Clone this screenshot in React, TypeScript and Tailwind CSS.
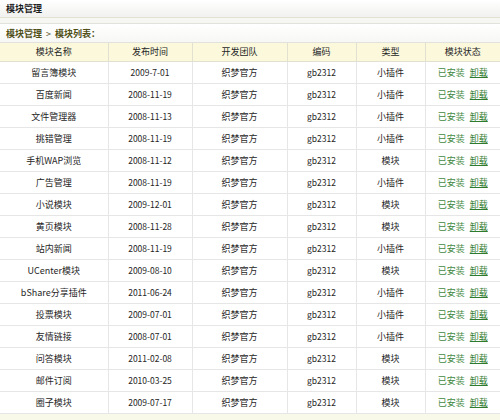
import React from 'react'

type Mod = { name: string; date: string; kind: string }

const MODULES: Mod[] = [
  { name: '留言簿模块', date: '2009-7-01', kind: '小插件' },
  { name: '百度新闻', date: '2008-11-19', kind: '小插件' },
  { name: '文件管理器', date: '2008-11-13', kind: '小插件' },
  { name: '挑错管理', date: '2008-11-19', kind: '小插件' },
  { name: '手机WAP浏览', date: '2008-11-12', kind: '模块' },
  { name: '广告管理', date: '2008-11-19', kind: '小插件' },
  { name: '小说模块', date: '2009-12-01', kind: '模块' },
  { name: '黄页模块', date: '2008-11-28', kind: '模块' },
  { name: '站内新闻', date: '2008-11-19', kind: '小插件' },
  { name: 'UCenter模块', date: '2009-08-10', kind: '模块' },
  { name: 'bShare分享插件', date: '2011-06-24', kind: '小插件' },
  { name: '投票模块', date: '2009-07-01', kind: '小插件' },
  { name: '友情链接', date: '2008-07-01', kind: '小插件' },
  { name: '问答模块', date: '2011-02-08', kind: '模块' },
  { name: '邮件订阅', date: '2010-03-25', kind: '模块' },
  { name: '圈子模块', date: '2009-07-17', kind: '模块' },
]

const HEADERS = ['模块名称', '发布时间', '开发团队', '编码', '类型', '模块状态']
const WIDTHS = ['w-[108px]', 'w-[84px]', 'w-[95px]', 'w-[69px]', 'w-[69px]', 'w-[75px]']

const FONT = { fontFamily: '"SimSun", "Noto Sans CJK SC", "Liberation Sans", sans-serif' }

export default function App() {
  return (
    <div className="h-[420px] w-[500px] overflow-hidden bg-[#f8f9e8] text-[9px] leading-none text-[#262626]" style={FONT}>
      <div className="flex h-[18px] items-center border-b border-[#e3e1d2] bg-gradient-to-b from-white to-[#f1f1ef] px-[6px] font-bold text-[#1e1e1e]">
        模块管理
      </div>
      <div className="h-[5px] bg-[#f6f6f2]" />
      <div className="flex h-[20px] items-center border-y border-[#e2e2dc] bg-gradient-to-b from-white to-[#f7f7f5] px-[6px] font-bold text-[#4f4f16]">
        模块管理<span className="mx-[4px] font-normal">&gt;</span>模块列表：
      </div>
      <table className="w-[500px] table-fixed border-collapse bg-white">
        <thead>
          <tr className="h-[18px] bg-[#fbf8dc]">
            {HEADERS.map((h, i) => (
              <th key={h} className={`${WIDTHS[i]} border-b border-l border-[#e2e0d0] font-normal first:border-l-0`}>
                {h}
              </th>
            ))}
          </tr>
        </thead>
        <tbody>
          {MODULES.map((m) => (
            <tr key={m.name} className="h-[22px] text-center">
              <td className="border-b border-[#e6e6e6]">{m.name}</td>
              <td className="border-b border-l border-[#e6e6e6] text-[8.5px]">{m.date}</td>
              <td className="border-b border-l border-[#e6e6e6]">织梦官方</td>
              <td className="border-b border-l border-[#e6e6e6] text-[8.5px]">gb2312</td>
              <td className="border-b border-l border-[#e6e6e6]">{m.kind}</td>
              <td className="border-b border-l border-[#e6e6e6]">
                <span className="text-[#3f8a3f]">已安装</span>
                <a href="#" className="ml-[5px] text-[#2e7a2e] underline">卸载</a>
              </td>
            </tr>
          ))}
        </tbody>
      </table>
    </div>
  )
}
